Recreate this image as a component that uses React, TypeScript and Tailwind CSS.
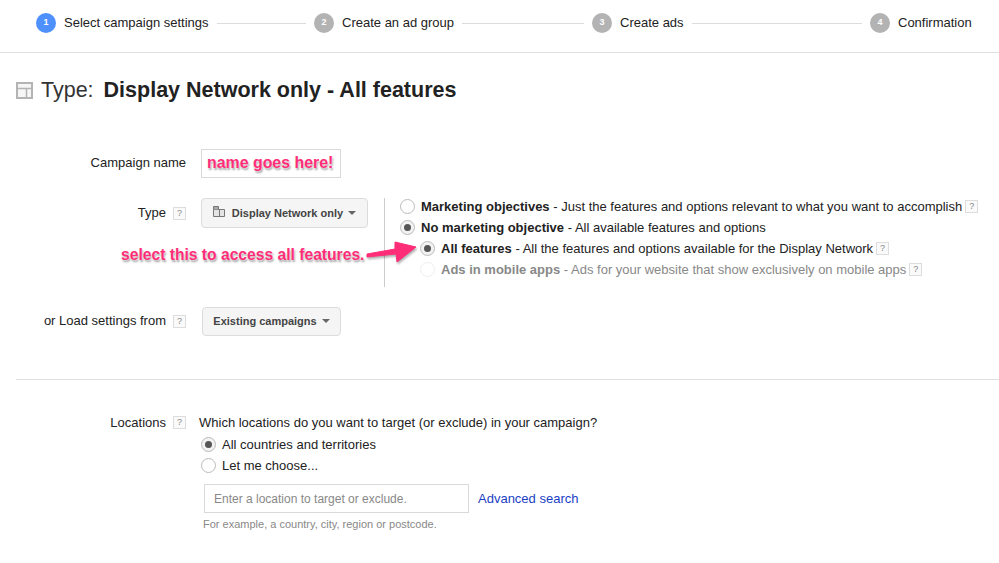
const font = { fontFamily: '"Liberation Sans", Arial, sans-serif' };

const annotationShadow = '[text-shadow:0_0_2px_#fff,1px_2px_2px_rgba(0,0,0,0.4)]';

function Step({ n, label, active, last }: { n: number; label: string; active?: boolean; last?: boolean }) {
  return (
    <div className={`flex items-center ${last ? 'shrink-0' : 'w-[278px] shrink-0'}`}>
      <div className={`w-5 h-5 rounded-full flex items-center justify-center text-white text-[9px] font-bold shrink-0 ${active ? 'bg-[#4d90fe]' : 'bg-[#b3b3b3]'}`}>
        {n}
      </div>
      <span className="ml-2 text-[13px] leading-4 text-[#222] whitespace-nowrap">{label}</span>
      {!last && <div className="flex-1 h-px bg-[#ddd] mx-2" />}
    </div>
  );
}

function Help() {
  return (
    <span className="inline-flex w-[13px] h-[13px] border border-[#ddd] bg-[#fafafa] items-center justify-center text-[9px] leading-none text-[#888] shrink-0">
      ?
    </span>
  );
}

function Radio({ on, faint }: { on?: boolean; faint?: boolean }) {
  return (
    <span
      className={`w-[15px] h-[15px] rounded-full border flex items-center justify-center shrink-0 ${
        faint ? 'border-[#eee]' : on ? 'border-[#bbb] bg-[#f2f2f2]' : 'border-[#bbb] bg-white'
      }`}
    >
      {on && <span className="w-[7px] h-[7px] rounded-full bg-[#555]" />}
    </span>
  );
}

function Caret() {
  return <span className="ml-[5px] w-0 h-0 border-x-[4px] border-x-transparent border-t-[4px] border-t-[#666] inline-block" />;
}

function RadioRow({ on, faint, title, text, help, indent }: { on?: boolean; faint?: boolean; title: string; text: string; help?: boolean; indent?: boolean }) {
  return (
    <div className={`flex items-center h-[21px] text-[13px] ${indent ? 'ml-5' : ''} ${faint ? 'text-[#888]' : 'text-[#222]'}`}>
      <Radio on={on} faint={faint} />
      <span className="ml-[6px] whitespace-nowrap">
        <b>{title}</b> - {text}
      </span>
      {help && <span className="ml-[3px] flex"><Help /></span>}
    </div>
  );
}

export default function App() {
  return (
    <div style={font} className="relative w-[999px] h-[563px] bg-white overflow-hidden text-[#222]">
      {/* Stepper */}
      <div className="h-[53px] border-b border-[#e0e0e0] pl-9 flex items-center pb-[6px]">
        <Step n={1} label="Select campaign settings" active />
        <Step n={2} label="Create an ad group" />
        <Step n={3} label="Create ads" />
        <Step n={4} label="Confirmation" last />
      </div>

      {/* Title */}
      <div className="flex items-center ml-4 mt-[23px] h-7">
        <svg width="17" height="17" viewBox="0 0 17 17" className="shrink-0">
          <rect x="1" y="1" width="15" height="15" fill="#f6f6f6" stroke="#b4b4b4" strokeWidth="2" />
          <path d="M2 6.500h13M10.500 6.500v9" stroke="#b4b4b4" strokeWidth="1.500" fill="none" />
        </svg>
        <span className="ml-2 text-[21.500px] leading-7 text-[#333]">Type:</span>
        <span className="ml-[10px] text-[21.500px] leading-7 font-bold text-[#222]">Display Network only - All features</span>
      </div>

      {/* Campaign name */}
      <div className="flex items-center mt-[44px] h-[30px]">
        <div className="w-[186px] text-right text-[13px]">Campaign name</div>
        <div className="ml-[15px] w-[140px] h-[29px] border border-[#d9d9d9] flex items-center pl-[5px]">
          <span className={`text-[#ff2d78] font-bold text-[15.900px] ${annotationShadow}`}>name goes here!</span>
        </div>
      </div>

      {/* Type */}
      <div className="flex mt-[20px] h-[90px]">
        <div className="w-[186px] flex justify-end items-center h-[30px] gap-[7px] text-[13px]">
          Type
          <Help />
        </div>
        <div className="ml-[15px] w-[167px] h-[30px] border border-[#dcdcdc] rounded-sm bg-[#f5f5f5] flex items-center justify-center text-[11px] font-bold text-[#444]">
          <svg width="12" height="11" viewBox="0 0 12 11" className="mr-[7px] -mt-[4px]">
            <path d="M0.500 3.500v7h11v-7z" fill="#e4e4e4" stroke="#777" />
            <path d="M0.500 3.500v-3h5v3M6.500 3.500v7" fill="#aaa" stroke="#777" />
          </svg>
          Display Network only
          <Caret />
        </div>
        <div className="ml-4 w-px h-[89px] bg-[#ccc]" />
        <div className="ml-[15px] -mt-[2px]">
          <RadioRow title="Marketing objectives" text="Just the features and options relevant to what you want to accomplish" help />
          <RadioRow on title="No marketing objective" text="All available features and options" />
          <RadioRow on indent title="All features" text="All the features and options available for the Display Network" help />
          <RadioRow faint indent title="Ads in mobile apps" text="Ads for your website that show exclusively on mobile apps" help />
        </div>
      </div>

      {/* Load settings */}
      <div className="flex items-center mt-[18px] h-[30px]">
        <div className="w-[186px] flex justify-end items-center gap-[7px] text-[13px]">
          or Load settings from
          <Help />
        </div>
        <div className="ml-4 w-[139px] h-[29px] border border-[#dcdcdc] rounded-sm bg-[#f5f5f5] flex items-center justify-center text-[11px] font-bold text-[#444]">
          Existing campaigns
          <Caret />
        </div>
      </div>

      <div className="ml-4 mt-[43px] h-px bg-[#e0e0e0]" />

      {/* Locations */}
      <div className="flex mt-[34px]">
        <div className="w-[186px] flex justify-end items-center gap-[7px] h-[17px] text-[13px]">
          Locations
          <Help />
        </div>
        <div className="ml-[13px]">
          <div className="text-[13px] leading-[17px] whitespace-nowrap">Which locations do you want to target (or exclude) in your campaign?</div>
          <div className="mt-[3px] ml-[2px]">
            <div className="flex items-center h-[21px] text-[13px]">
              <Radio on />
              <span className="ml-[6px]">All countries and territories</span>
            </div>
            <div className="flex items-center h-[21px] text-[13px]">
              <Radio />
              <span className="ml-[6px]">Let me choose...</span>
            </div>
          </div>
          <div className="flex items-center mt-[8px] ml-[5px]">
            <div className="w-[265px] h-[29px] border border-[#d9d9d9] flex items-center pl-[9px] text-[12px] text-[#888]">
              Enter a location to target or exclude.
            </div>
            <a className="ml-[9px] text-[13px] text-[#1a3fc4]">Advanced search</a>
          </div>
          <div className="mt-[4px] ml-1 text-[11px] leading-[14px] text-[#888]">For example, a country, city, region or postcode.</div>
        </div>
      </div>

      {/* Annotation over the form */}
      <span className={`absolute left-[121px] top-[245px] whitespace-nowrap text-[#ff2d78] font-bold text-[15.650px] leading-5 ${annotationShadow}`}>
        select this to access all features.
      </span>
      <svg className="absolute left-[362px] top-[236px] drop-shadow-[1px_2px_1px_rgba(0,0,0,0.3)]" width="58" height="32" viewBox="0 0 58 32">
        <path d="M5 18 L33 13 L33 6 L54 11 L35 26 L34 18 L5 21 Z" fill="#ff2d78" stroke="#ff2d78" strokeLinejoin="round" />
      </svg>
    </div>
  );
}
